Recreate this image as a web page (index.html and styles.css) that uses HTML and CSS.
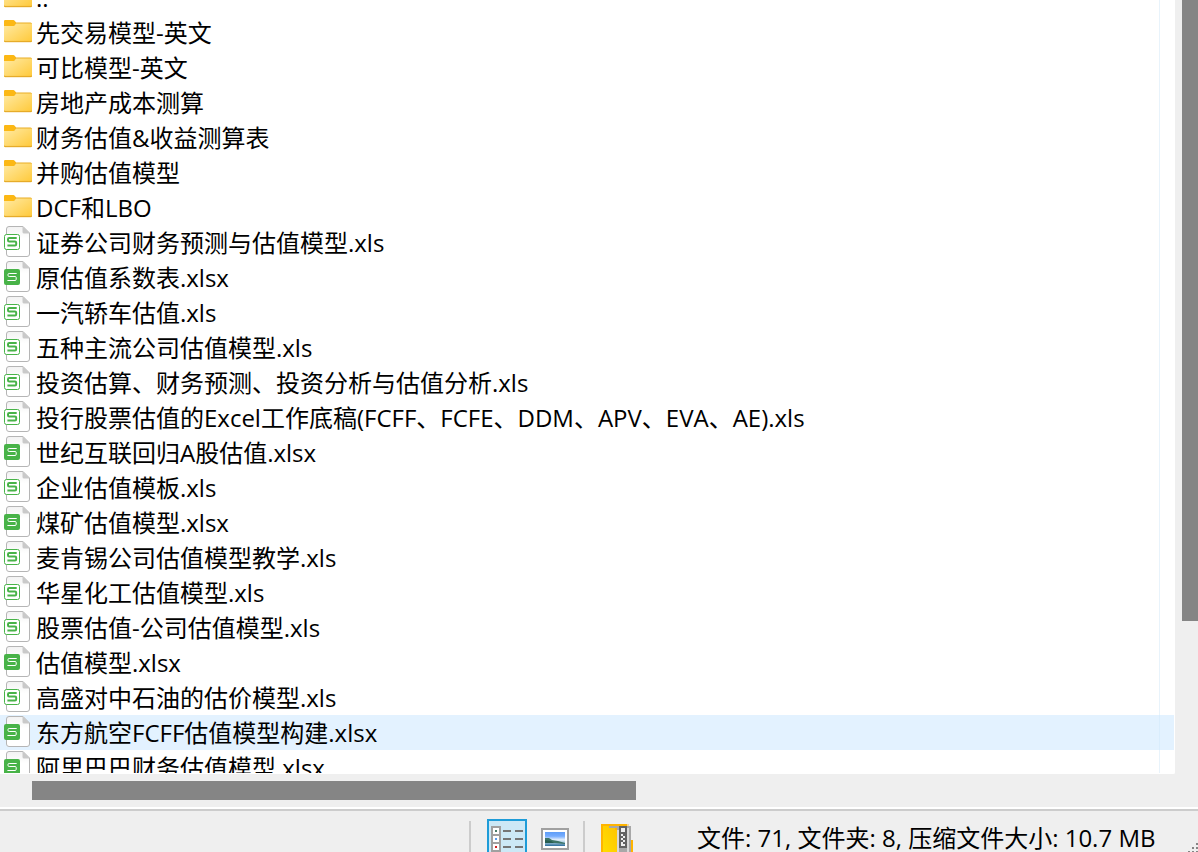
FILE: index.html
```html
<!DOCTYPE html>
<html lang="zh-CN">
<head>
    <title>压缩文件</title>
    <meta charset="UTF-8">
    <link rel="stylesheet" href="styles.css">
</head>
<body>
    <svg class="symbols" aria-hidden="true">
        <defs>
            <linearGradient id="folder-fill" x1="0" y1="0" x2="1" y2="1">
                <stop offset="0" stop-color="#ffeaa4"/>
                <stop offset="1" stop-color="#ffc939"/>
            </linearGradient>
            <linearGradient id="page-fill" x1="0" y1="0" x2="0" y2="1">
                <stop offset="0" stop-color="#f2f2f2"/>
                <stop offset="0.4" stop-color="#ffffff"/>
            </linearGradient>
            <linearGradient id="photo-fill" x1="0" y1="0" x2="0" y2="1">
                <stop offset="0" stop-color="#5f9df7"/>
                <stop offset="0.3" stop-color="#76adff"/>
                <stop offset="0.55" stop-color="#e2eefb"/>
                <stop offset="0.7" stop-color="#b5d5e6"/>
                <stop offset="1" stop-color="#2b6c9b"/>
            </linearGradient>
            <linearGradient id="zip-fill" x1="0" y1="1" x2="1" y2="0">
                <stop offset="0" stop-color="#ffe000"/>
                <stop offset="1" stop-color="#ffc400"/>
            </linearGradient>
        </defs>
        <symbol id="folder" viewBox="0 0 28 32">
            <path d="M0 5.5Q0 4 1.500 4H9Q10.500 4 12 6.500H26.500Q28 6.500 28 8V12H0z" fill="#e9ad24"/>
            <path d="M0 10H9Q10.500 10 12 7.500H27.500Q28 7.500 28 8.500V24.500Q28 26 26.500 26H1.500Q0 26 0 24.500z" fill="url(#folder-fill)"/>
            <path d="M0 5.500Q0 4 1.500 4H9Q10.500 4 11.800 6.500L11 8.500Q10 10 8.500 10H0z" fill="#fcb814"/>
            <path d="M0 24.500Q0.500 25.300 1.500 25.300H26.500Q27.500 25.300 28 24.500Q28 26 26.500 26H1.500Q0 26 0 24.500z" fill="#dfa320" stroke="#e3a825" stroke-width="0.400"/>
        </symbol>
        <symbol id="page" viewBox="0 0 28 32">
            <path d="M5 .5H19L25.500 7V28Q25.500 30.500 23 30.500H5Q2.500 30.500 2.500 28V3Q2.500 .5 5 .5z" fill="url(#page-fill)" stroke="#b5b5b5"/>
            <path d="M18.500 .5H19L25.500 7V7.500H20Q18.500 7.500 18.500 6z" fill="#c9c9c9"/>
        </symbol>
        <symbol id="xls" viewBox="0 0 28 32">
            <use href="#page"/>
            <rect x="0.500" y="8.500" width="15" height="15" rx="2" fill="#fff" stroke="#48b348"/>
            <path d="M12.700 12H5.200Q4 12 4 13.200V14.300Q4 15.500 5.200 15.500H11Q12.200 15.500 12.200 16.700V18.300Q12.200 19.500 11 19.500H3.400" fill="none" stroke="#48b348" stroke-width="2"/>
        </symbol>
        <symbol id="xlsx" viewBox="0 0 28 32">
            <use href="#page"/>
            <rect x="0" y="8" width="16" height="16" rx="2" fill="#48b348"/>
            <path d="M12.700 12.500H5.200Q4 12.500 4 13.500V14.500Q4 15.500 5.200 15.500H11Q12.200 15.500 12.200 16.500V18.300Q12.200 19.500 11 19.500H3.400" fill="none" stroke="#fff" stroke-width="1"/>
        </symbol>
    </svg>

    <div class="window">
        <main class="panel">
            <ul class="files">
                <li><svg class="icon"><use href="#folder"/></svg><span>..</span></li>
                <li><svg class="icon"><use href="#folder"/></svg><span>先交易模型-英文</span></li>
                <li><svg class="icon"><use href="#folder"/></svg><span>可比模型-英文</span></li>
                <li><svg class="icon"><use href="#folder"/></svg><span>房地产成本测算</span></li>
                <li><svg class="icon"><use href="#folder"/></svg><span>财务估值&amp;收益测算表</span></li>
                <li><svg class="icon"><use href="#folder"/></svg><span>并购估值模型</span></li>
                <li><svg class="icon"><use href="#folder"/></svg><span>DCF和LBO</span></li>
                <li><svg class="icon"><use href="#xls"/></svg><span>证券公司财务预测与估值模型.xls</span></li>
                <li><svg class="icon"><use href="#xlsx"/></svg><span>原估值系数表.xlsx</span></li>
                <li><svg class="icon"><use href="#xls"/></svg><span>一汽轿车估值.xls</span></li>
                <li><svg class="icon"><use href="#xls"/></svg><span>五种主流公司估值模型.xls</span></li>
                <li><svg class="icon"><use href="#xls"/></svg><span>投资估算、财务预测、投资分析与估值分析.xls</span></li>
                <li><svg class="icon"><use href="#xls"/></svg><span>投行股票估值的Excel工作底稿(FCFF、FCFE、DDM、APV、EVA、AE).xls</span></li>
                <li><svg class="icon"><use href="#xlsx"/></svg><span>世纪互联回归A股估值.xlsx</span></li>
                <li><svg class="icon"><use href="#xls"/></svg><span>企业估值模板.xls</span></li>
                <li><svg class="icon"><use href="#xlsx"/></svg><span>煤矿估值模型.xlsx</span></li>
                <li><svg class="icon"><use href="#xls"/></svg><span>麦肯锡公司估值模型教学.xls</span></li>
                <li><svg class="icon"><use href="#xls"/></svg><span>华星化工估值模型.xls</span></li>
                <li><svg class="icon"><use href="#xls"/></svg><span>股票估值-公司估值模型.xls</span></li>
                <li><svg class="icon"><use href="#xlsx"/></svg><span>估值模型.xlsx</span></li>
                <li><svg class="icon"><use href="#xls"/></svg><span>高盛对中石油的估价模型.xls</span></li>
                <li class="hover"><svg class="icon"><use href="#xlsx"/></svg><span>东方航空FCFF估值模型构建.xlsx</span></li>
                <li><svg class="icon"><use href="#xlsx"/></svg><span>阿里巴巴财务估值模型.xlsx</span></li>
            </ul>
            <div class="scroll-y"><div class="thumb"></div></div>
            <div class="scroll-x"><div class="thumb"></div></div>
        </main>

        <footer class="status">
            <div class="separator"></div>
            <button class="view active" type="button" aria-label="详细列表">
                <svg width="36" height="36" viewBox="0 0 36 36" shape-rendering="crispEdges">
                    <path d="M2 5H12V35H2z" fill="#a0a0a0"/>
                    <path d="M4 7H10V13H4zM4 15H10V21H4zM4 23H10V29H4z" fill="#fff"/>
                    <path d="M6 9H8V11H6z" fill="#4b7d6b"/>
                    <path d="M6 17H8V19H6z" fill="#589bed"/>
                    <path d="M6 25H8V27H6z" fill="#d42020"/>
                    <path d="M14 9H22V11H14zM26 9H34V11H26zM14 17H22V19H14zM26 17H34V19H26zM14 25H22V27H14zM26 25H34V27H26z" fill="#757575"/>
                </svg>
            </button>
            <button class="view" type="button" aria-label="缩略图">
                <svg width="36" height="36" viewBox="0 0 36 36">
                    <path d="M4 7H32V29H4z" fill="#a0a0a0"/>
                    <path d="M6 9H30V27H6z" fill="#fff"/>
                    <path d="M8 11H28V25H8z" fill="url(#photo-fill)"/>
                    <path d="M8 17L12 17L15 19L21 20L28 22V23L18 22L8 22z" fill="#3e7466"/>
                    <path d="M8 19L14 20L17 22H8z" fill="#285e50"/>
                </svg>
            </button>
            <div class="separator"></div>
            <svg class="archive" width="32" height="32" viewBox="0 0 32 32" shape-rendering="crispEdges">
                <path d="M0 0H28V16H32V32H0z" fill="#ffb400"/>
                <path d="M26 0H28V2H26z" fill="#f8d58e"/>
                <path d="M28 0H32V16H30V2H28z" fill="#efefef"/>
                <path d="M8 2H30V32H16V4H8z" fill="#a8a8a8"/>
                <path d="M16 6H18V32H16zM26 4H28V32H26z" fill="#d8d8d8"/>
                <path d="M2 2H8V4H14V6H16V32H2z" fill="url(#zip-fill)"/>
                <path d="M18 2H26V24H18z" fill="#626262"/>
                <path d="M20 4H24V8H20zM20 10H22V12H20zM22 12H24V14H22zM20 14H22V16H20zM22 16H24V18H22zM20 18H22V20H20zM20 20H24V22H20z" fill="#eee"/>
            </svg>
            <p class="summary">文件: 71, 文件夹: 8, 压缩文件大小: 10.7 MB</p>
            <svg class="grip" width="12" height="12" viewBox="0 0 12 12" shape-rendering="crispEdges">
                <path d="M10 1H12V3H10zM6 5H8V7H6zM10 5H12V7H10zM2 9H4V11H2zM6 9H8V11H6zM10 9H12V11H10z" fill="#858585"/>
            </svg>
        </footer>
    </div>
</body>
</html>
```

FILE: styles.css
```css
* {
    box-sizing: border-box;
}
body {
    margin: 0;
    background-color: #efefef;
    color: #000;
    font-family: "Open Sans", "Noto Sans CJK SC", sans-serif;
    font-size: 24px;
}
.symbols {
    position: absolute;
    width: 0;
    height: 0;
}
.window {
    display: flex;
    flex-direction: column;
    height: 100vh;
    overflow: hidden;
}
.panel {
    flex: 1;
    min-height: 0;
    display: grid;
    grid-template-columns: 1fr 23px;
    grid-template-rows: 1fr 33px;
}
.files {
    margin: 0;
    padding: 0;
    list-style: none;
    min-height: 0;
    overflow: hidden;
    background: linear-gradient(#e8f3fb, #e8f3fb) right 14px top 0 / 1px 100% no-repeat #fff;
    border-right: 1px solid #fff;
    border-bottom: 1px solid #fff;
    border-bottom-right-radius: 2px;
}
/* list is scrolled part of a row down */
.files li:first-child {
    margin-top: -20px;
}
.files li {
    display: flex;
    align-items: flex-start;
    gap: 4px;
    height: 35px;
    padding-left: 4px;
    line-height: 35px;
    white-space: nowrap;
}
.files li.hover {
    background-color: rgba(204, 232, 255, 0.55);
}
.icon {
    flex: none;
    width: 28px;
    height: 32px;
    margin-top: 1px;
}
.scroll-y {
    padding-left: 7px;
}
.scroll-y .thumb {
    height: 80.2%;
    background-color: #858585;
}
.scroll-x {
    padding: 7px 0 7px 32px;
}
.scroll-x .thumb {
    width: 52.8%;
    height: 19px;
    background-color: #858585;
}
.status {
    display: flex;
    align-items: flex-start;
    justify-content: flex-end;
    height: 45px;
    padding-top: 8px;
    border-top: 2px solid #fff;
    box-shadow: inset 0 2px #ccc;
    overflow: hidden;
}
.separator {
    width: 2px;
    height: 40px;
    margin: 4px 16px 0;
    background-color: #ccc;
}
.separator + .archive {
    margin-top: 7px;
}
.view {
    flex: none;
    width: 40px;
    height: 40px;
    margin-top: 2px;
    padding: 0;
    border: 2px solid transparent;
    background: none;
}
.view svg {
    display: block;
}
.view + .view {
    margin-left: 8px;
}
.view + .separator {
    margin-left: 8px;
}
.view.active {
    border-color: #1e9cd8;
    background-color: #cce8f6;
}
.archive {
    flex: none;
}
.summary {
    min-width: 464px;
    margin: 3px 25px 0 64px;
    line-height: 36px;
    white-space: nowrap;
}
.grip {
    flex: none;
    margin-top: 25px;
}
```
